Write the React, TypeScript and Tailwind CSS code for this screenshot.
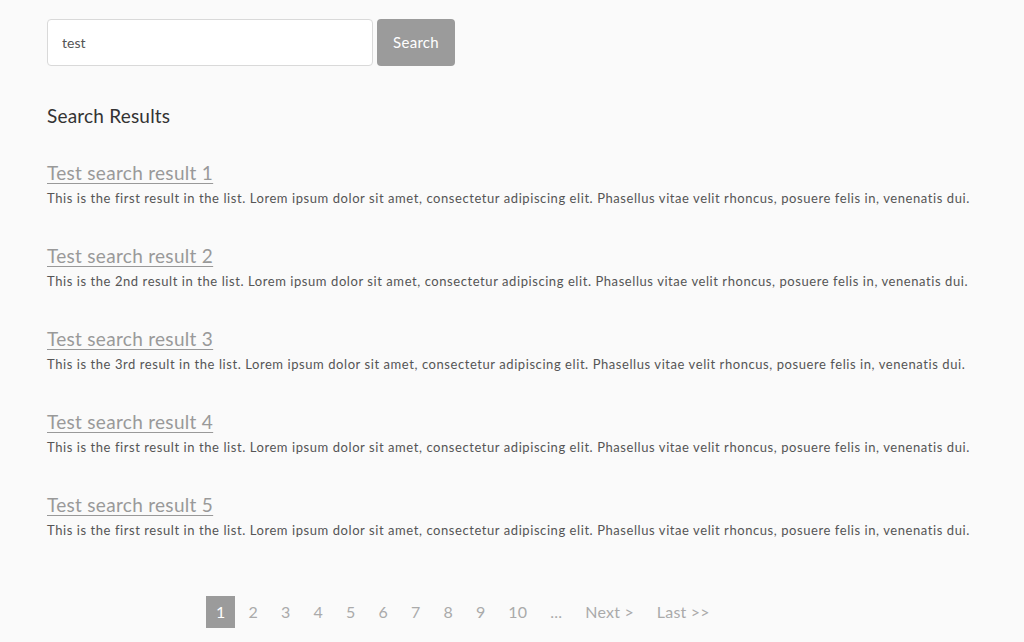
import React from 'react';

const results = [
  { title: 'Test search result 1', desc: 'This is the first result in the list.' },
  { title: 'Test search result 2', desc: 'This is the 2nd result in the list.' },
  { title: 'Test search result 3', desc: 'This is the 3rd result in the list.' },
  { title: 'Test search result 4', desc: 'This is the first result in the list.' },
  { title: 'Test search result 5', desc: 'This is the first result in the list.' },
];

const lorem =
  ' Lorem ipsum dolor sit amet, consectetur adipiscing elit. Phasellus vitae velit rhoncus, posuere felis in, venenatis dui.';

export default function App() {
  const pages = ['2', '3', '4', '5', '6', '7', '8', '9', '10', '...', 'Next >', 'Last >>'];

  return (
    <div className="min-h-[642px] w-full bg-[#fafafa] font-['Lato',sans-serif] text-[#555]">
      <div className="px-[47px] pt-[19px]">
        {/* Search bar */}
        <div className="flex gap-[4px]">
          <input
            defaultValue="test"
            className="h-[47px] w-[326px] rounded-[4px] border border-[#d9d9d9] bg-white px-[14px] text-[14px] text-[#555] outline-none"
          />
          <button className="h-[47px] w-[78px] rounded-[4px] bg-[#9b9b9b] text-[15px] tracking-[0.3px] text-white">
            Search
          </button>
        </div>

        <h2 className="mt-[38px] text-[19px] leading-[24px] tracking-[0.2px] text-[#333]">Search Results</h2>

        {/* Results */}
        <div className="mt-[33px] flex flex-col gap-[34px]">
          {results.map((r) => (
            <div key={r.title}>
              <a
                href="#"
                className="text-[19px] leading-[24px] tracking-[0.3px] text-[#999] underline underline-offset-[3px]"
              >
                {r.title}
              </a>
              <p className="mt-[1px] whitespace-nowrap text-[13px] leading-[23px] tracking-[0.57px] text-[#555]">
                {r.desc}
                {lorem}
              </p>
            </div>
          ))}
        </div>

        {/* Pagination */}
        <div className="mt-[54px] flex items-center gap-[3px] pl-[159px] text-[16px] tracking-[0.2px] text-[#aaa]">
          <span className="flex h-[32px] items-center bg-[#9b9b9b] px-[10px] text-white">1</span>
          {pages.map((p) => (
            <span key={p} className="flex h-[32px] items-center px-[10px]">
              {p}
            </span>
          ))}
        </div>
      </div>
    </div>
  );
}
